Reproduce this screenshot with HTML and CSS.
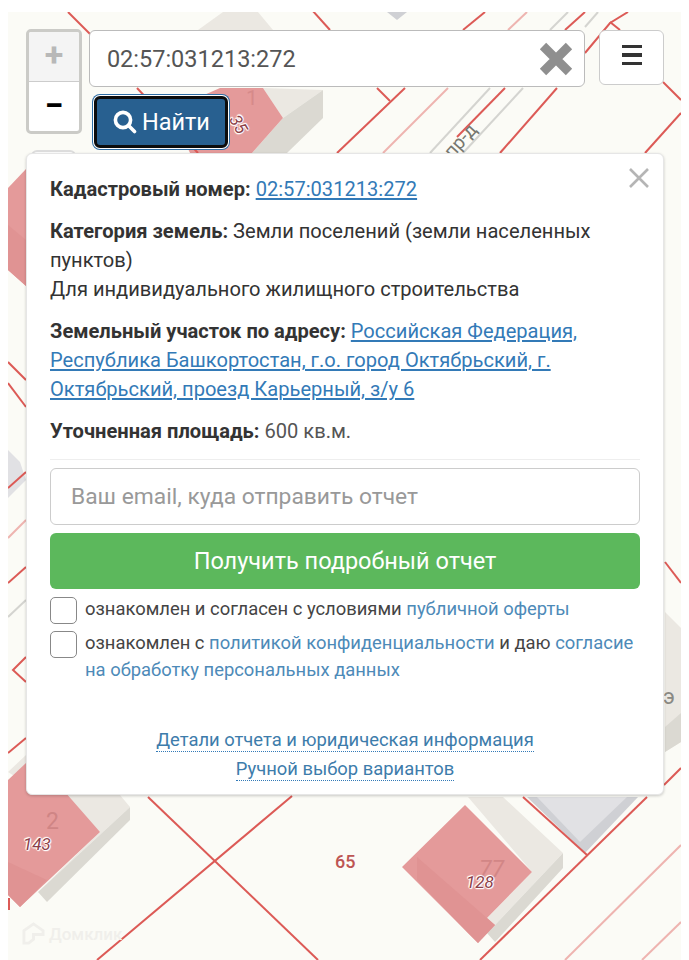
FILE: index.html
```html
<!DOCTYPE html>
<html lang="ru">
  <head>
    <meta charset="UTF-8" />
    <meta name="viewport" content="width=device-width, initial-scale=1.0" />
    <title>Кадастровая карта</title>
    <link rel="stylesheet" href="styles.css">
  </head>
  <body>
    <div class="map">
      <!-- подложка карты, координаты совпадают с координатами страницы -->
      <svg class="map-bg" viewBox="8 12 673 948" width="673" height="948">
        <g class="beige">
          <polygon points="198,30 223,12 258,12 273,30" />
          <polygon points="263,88 323,90 283,118" />
          <polygon points="8,772 26,755 65,792 120,795 130,807 38,892 100,832" />
          <polygon points="468,797 503,797 563,853 495,925 487,918 532,872" />
          <polygon points="665,612 681,628 681,742 665,752" />
        </g>
        <g class="beige-dark">
          <polygon points="323,90 323,118 287,153 252,153 283,118" />
          <polygon points="130,807 130,820 47,902 38,892" />
          <polygon points="563,853 563,868 495,942 487,933 495,925" />
          <polygon points="665,727 681,713 681,742 665,752" />
        </g>
        <polygon class="grey-dark" points="527,797 638,797 585,853" />
        <polygon class="grey" points="537,797 627,797 580,842" />
        <polygon class="grey-dark" points="387,12 407,12 397,20" />
        <polygon class="grey" points="8,450 20,462 26,480 8,498" />
        <g class="pink">
          <polygon points="220,88 263,88 283,118 252,153 190,153 170,110" />
          <polygon points="26,169 8,188 8,270 26,286" />
          <polygon points="8,780 26,763 65,792 100,832 20,907 8,895" />
          <polygon points="465,805 532,872 487,918 495,925 478,943 402,867" />
        </g>
        <g class="pink-dark">
          <polygon points="8,225 26,240 26,286 8,270" />
          <polygon points="8,862 47,880 20,907 8,895" />
          <polygon points="417,857 495,925 478,943 468,933 417,880" />
        </g>
        <g class="road">
          <line x1="568" y1="12" x2="550" y2="30" />
          <line x1="598" y1="12" x2="585" y2="27" />
          <line x1="490" y1="88" x2="430" y2="153" />
          <line x1="523" y1="88" x2="463" y2="153" />
          <line x1="8" y1="617" x2="26" y2="600" />
        </g>
        <g class="thin">
          <line x1="527" y1="12" x2="508" y2="30" />
          <line x1="448" y1="88" x2="383" y2="153" />
          <line x1="8" y1="538" x2="26" y2="520" />
          <line x1="681" y1="845" x2="565" y2="960" />
          <line x1="681" y1="922" x2="642" y2="960" />
        </g>
        <g class="red">
          <line x1="68" y1="12" x2="92" y2="36" />
          <line x1="312" y1="10" x2="330" y2="30" />
          <line x1="485" y1="12" x2="463" y2="30" />
          <line x1="585" y1="12" x2="565" y2="30" />
          <polyline points="628,12 610,23 585,53" />
          <line x1="610" y1="22" x2="620" y2="30" />
          <line x1="663" y1="82" x2="681" y2="100" />
          <line x1="681" y1="113" x2="645" y2="153" />
          <line x1="137" y1="88" x2="198" y2="153" />
          <line x1="405" y1="88" x2="337" y2="153" />
          <line x1="377" y1="88" x2="390" y2="101" />
          <line x1="505" y1="88" x2="457" y2="137" />
          <line x1="557" y1="88" x2="500" y2="153" />
          <line x1="8" y1="362" x2="26" y2="380" />
          <line x1="8" y1="383" x2="26" y2="407" />
          <line x1="8" y1="488" x2="26" y2="472" />
          <line x1="8" y1="583" x2="26" y2="567" />
          <polyline points="26,657 13,670 26,682" />
          <line x1="665" y1="562" x2="681" y2="583" />
          <line x1="8" y1="753" x2="26" y2="738" />
          <line x1="664" y1="785" x2="681" y2="768" />
          <line x1="148" y1="797" x2="318" y2="960" />
          <line x1="292" y1="796" x2="97" y2="960" />
          <line x1="647" y1="797" x2="480" y2="960" />
          <line x1="523" y1="797" x2="587" y2="855" />
          <line x1="9" y1="898" x2="9" y2="910" />
        </g>
      </svg>
      <span class="label label-road">пр-д</span>
      <span class="label label-one">1</span>
      <span class="label label-65">65</span>
      <span class="label label-2">2</span>
      <span class="label label-77">77</span>
      <span class="label label-e">э</span>
      <span class="label label-area label-35">35</span>
      <span class="label label-area label-143">143</span>
      <span class="label label-area label-128">128</span>
      <div class="watermark">
        <svg viewBox="0 0 24 24" width="23" height="23">
          <path d="M2 9 L12 2 L22 9 L22 13 L12 13 L12 18 L7 22 L2 22 Z" />
        </svg>
        <span>Домклик</span>
      </div>

      <div class="ui">
        <div class="top">
          <div class="controls">
            <div class="zoom">
              <div class="zoom-in">+</div>
              <div class="zoom-out">−</div>
            </div>
            <div class="layers"></div>
          </div>
          <div class="search">
            <div class="search-input">
              <span>02:57:031213:272</span>
              <svg class="clear" viewBox="0 0 34 34" width="34" height="34">
                <path d="M4 4 L30 30 M30 4 L4 30" />
              </svg>
            </div>
            <button class="find">
              <svg viewBox="0 0 24 24" width="24" height="24">
                <circle cx="10" cy="10" r="7.6" />
                <line x1="15.5" y1="15.5" x2="21.5" y2="21.5" />
              </svg>
              Найти
            </button>
          </div>
          <div class="menu"><i></i><i></i><i></i></div>
        </div>

        <div class="popup">
          <svg class="popup-close" viewBox="0 0 20 20" width="20" height="20">
            <path d="M1 1 L19 19 M19 1 L1 19" />
          </svg>
          <p><b>Кадастровый номер:</b> <a href="#">02:57:031213:272</a></p>
          <p><b>Категория земель:</b> Земли поселений (земли населенных пунктов)<br>Для индивидуального жилищного строительства</p>
          <p><b>Земельный участок по адресу:</b> <a href="#">Российская Федерация, Республика Башкортостан, г.о. город Октябрьский, г. Октябрьский, проезд Карьерный, з/у 6</a></p>
          <p class="last"><b>Уточненная площадь:</b> <span class="area">600 кв.м.</span></p>
          <hr>
          <div class="email">Ваш email, куда отправить отчет</div>
          <button class="report">Получить подробный отчет</button>
          <div class="check">
            <span class="box"></span>
            <div class="check-text">ознакомлен и согласен с условиями <a class="plain" href="#">публичной оферты</a></div>
          </div>
          <div class="check">
            <span class="box"></span>
            <div class="check-text">ознакомлен с <a class="plain" href="#">политикой конфиденциальности</a> и даю <a class="plain" href="#">согласие на обработку персональных данных</a></div>
          </div>
          <div class="more">
            <a href="#">Детали отчета и юридическая информация</a>
            <a href="#">Ручной выбор вариантов</a>
          </div>
        </div>
      </div>
    </div>
  </body>
</html>
```

FILE: styles.css
```css
* {
  box-sizing: border-box;
}

body {
  margin: 0;
  background-color: #fff;
  font-family: Roboto, "Noto Sans", sans-serif;
  color: #333;
}

.map {
  position: relative;
  width: 673px;
  height: 948px;
  margin: 12px 8px 0;
  overflow: hidden;
  background-color: #fbfbf6;
}

.map-bg {
  position: absolute;
  top: 0;
  left: 0;
  filter: blur(0.4px);
}

.beige {
  fill: #ebe8e2;
}

.beige-dark {
  fill: #dbd9d2;
}

.grey {
  fill: #e1e1e4;
}

.grey-dark {
  fill: #cfd0d4;
}

.pink {
  fill: #e49a9a;
}

.pink-dark {
  fill: #e09393;
}

.road line {
  stroke: #d4d4d0;
  stroke-width: 2;
}

.thin line {
  stroke: #eeb4b0;
  stroke-width: 2;
}

.red line,
.red polyline {
  stroke: #dc5a56;
  stroke-width: 2;
  fill: none;
}

/* подписи на карте */
.label {
  position: absolute;
  line-height: 1;
}

.label-road {
  left: 433px;
  top: 119px;
  font-size: 19px;
  color: #77776f;
  transform: rotate(-48deg);
}

.label-one {
  left: 238px;
  top: 76px;
  font-size: 21px;
  color: #d68a8a;
}

.label-65 {
  left: 327px;
  top: 841px;
  font-size: 18px;
  font-weight: 500;
  color: #bd5553;
}

.label-2 {
  left: 38px;
  top: 798px;
  font-size: 23px;
  color: #cf8585;
}

.label-77 {
  left: 471px;
  top: 846px;
  font-size: 23px;
  font-style: italic;
  color: #d28686;
}

.label-e {
  left: 655px;
  top: 674px;
  font-size: 22px;
  color: #8a8a84;
}

.label-area {
  font-size: 17px;
  font-style: italic;
  color: #8c3f49;
  text-shadow: 1px 0 1px #fff, -1px 0 1px #fff, 0 1px 1px #fff, 0 -1px 1px #fff, 1px 1px 1px #fff, -1px -1px 1px #fff;
}

.label-35 {
  left: 221px;
  top: 104px;
  transform: rotate(60deg);
}

.label-143 {
  left: 15px;
  top: 824px;
}

.label-128 {
  left: 458px;
  top: 862px;
}

.watermark {
  position: absolute;
  left: 14px;
  top: 910px;
  display: flex;
  align-items: center;
  gap: 4px;
  font-size: 17px;
  font-weight: 500;
  color: #f0efeb;
}

.watermark svg {
  fill: none;
  stroke: #f0efeb;
  stroke-width: 3;
}

.ui {
  position: relative;
  padding: 17px 17px 0 18px;
}

.top {
  display: flex;
  height: 124px;
}

.controls {
  width: 56px;
  margin-right: 7px;
}

.zoom {
  height: 105px;
  border: 3px solid #cbcbc7;
  border-radius: 5px;
  overflow: hidden;
  background-color: #fff;
}

.zoom-in,
.zoom-out {
  display: flex;
  justify-content: center;
  font-size: 34px;
  font-weight: 700;
  line-height: 1;
  color: #000;
}

.zoom-in {
  height: 50px;
  padding-top: 5px;
  background-color: #f4f4f4;
  border-bottom: 1px solid #ccc;
  color: #b8b8b8;
}

.zoom-out {
  height: 49px;
  padding-top: 6px;
}

.layers {
  width: 45px;
  height: 40px;
  margin: 16px 0 0 5px;
  background-color: #fff;
  border: 2px solid #ddd;
  border-radius: 6px;
}

.search {
  width: 497px;
  margin-top: 1px;
}

.search-input {
  height: 57px;
  padding: 0 11px 0 17px;
  display: flex;
  align-items: center;
  justify-content: space-between;
  background-color: #fff;
  border: 1px solid #bbb;
  border-radius: 6px;
  font-size: 23.5px;
  color: #555;
}

.clear {
  fill: none;
  stroke: #8f8f8f;
  stroke-width: 9;
}

.find {
  display: flex;
  align-items: center;
  gap: 5px;
  width: 134px;
  height: 52px;
  margin: 9px 0 0 5px;
  padding: 0 0 0 16px;
  background-color: #286090;
  border: 3px solid #0c0c0c;
  border-radius: 6px;
  box-shadow: 0 0 0 1px #fff, 0 0 0 2px #2e6da4;
  font-family: inherit;
  font-size: 23.5px;
  color: #fff;
}

.find svg {
  fill: none;
  stroke: #fff;
  stroke-width: 3.6;
  stroke-linecap: round;
}

.menu {
  width: 65px;
  height: 55px;
  margin: 1px 0 0 14px;
  padding-top: 14px;
  display: flex;
  flex-direction: column;
  align-items: center;
  gap: 5px;
  background-color: #fff;
  border: 1px solid #ccc;
  border-radius: 6px;
}

.menu i {
  width: 20px;
  height: 3.4px;
  background-color: #333;
}

.popup {
  position: relative;
  width: 638px;
  height: 642px;
  padding: 21px 23px 0;
  background-color: #fff;
  border: 1px solid #e6e6e6;
  border-radius: 6px;
  box-shadow: 0 1px 3px rgba(0, 0, 0, 0.2);
  font-size: 20.1px;
  line-height: 29px;
}

.popup-close {
  position: absolute;
  top: 14px;
  right: 14px;
  fill: none;
  stroke: #b5b5b5;
  stroke-width: 2.6;
}

.popup p {
  margin: 0 0 13px;
}

.popup b {
  font-weight: 700;
}

.popup a {
  color: #337ab7;
}

.area {
  color: #555;
}

.popup hr {
  margin: 0 0 8px;
  border: 0;
  border-top: 1px solid #eee;
}

.email {
  height: 57px;
  padding-left: 20px;
  display: flex;
  align-items: center;
  border: 1px solid #ccc;
  border-radius: 6px;
  font-size: 22.8px;
  color: #999;
}

.report {
  display: block;
  width: 100%;
  height: 56px;
  margin: 8px 0;
  background-color: #5cb85c;
  border: 0;
  border-radius: 6px;
  font-family: inherit;
  font-size: 23.5px;
  color: #fff;
}

.check {
  display: flex;
  gap: 8px;
  margin-bottom: 7px;
  font-size: 18.4px;
  line-height: 27px;
  color: #444;
}

.check-text {
  margin-top: -2px;
}

.box {
  flex: none;
  width: 27px;
  height: 27px;
  border: 1px solid #888;
  border-radius: 5px;
  background-color: #fff;
}

.popup a.plain {
  color: #4d8ab8;
  text-decoration: none;
}

.more {
  margin-top: 46px;
  display: flex;
  flex-direction: column;
  align-items: center;
  gap: 6px;
  font-size: 18.4px;
  line-height: 22px;
}

.popup .more a {
  color: #3d7cab;
  text-decoration: none;
  border-bottom: 1px dotted #337ab7;
}
```
